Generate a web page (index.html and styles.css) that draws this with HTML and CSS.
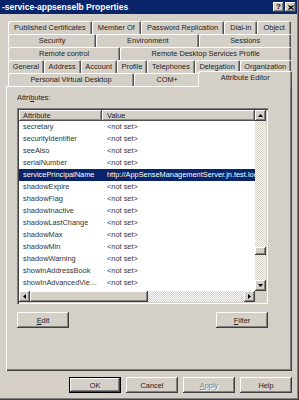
FILE: index.html
```html
<!DOCTYPE html>
<html lang="en">
<head>
    <meta charset="UTF-8">
    <title>-service-appsenselb Properties</title>
    <link rel="stylesheet" href="styles.css">
</head>
<body>
    <div class="window">
        <div class="titlebar">
            <span class="title">-service-appsenselb Properties</span>
            <div class="caption-btns">
                <span class="cbtn">?</span>
                <span class="cbtn">
                    <svg width="6" height="5" viewBox="0 0 6 5"><path d="M0.5 0.5L5.5 4.5M5.5 0.5L0.5 4.5" stroke="#000" stroke-width="1.3"/></svg>
                </span>
            </div>
        </div>

        <div class="tabs">
            <div class="tab-row">
                <div class="tab">Published Certificates</div>
                <div class="tab">Member Of</div>
                <div class="tab">Password Replication</div>
                <div class="tab">Dial-in</div>
                <div class="tab">Object</div>
            </div>
            <div class="tab-row">
                <div class="tab">Security</div>
                <div class="tab">Environment</div>
                <div class="tab">Sessions</div>
            </div>
            <div class="tab-row">
                <div class="tab">Remote control</div>
                <div class="tab">Remote Desktop Services Profile</div>
            </div>
            <div class="tab-row">
                <div class="tab">General</div>
                <div class="tab">Address</div>
                <div class="tab">Account</div>
                <div class="tab">Profile</div>
                <div class="tab">Telephones</div>
                <div class="tab">Delegation</div>
                <div class="tab">Organization</div>
            </div>
            <div class="tab-row">
                <div class="tab">Personal Virtual Desktop</div>
                <div class="tab">COM+</div>
                <div class="tab active">Attribute Editor</div>
            </div>
        </div>

        <div class="panel">
            <div class="label">Attri<u>b</u>utes:</div>
            <div class="listbox">
                <div class="list-area">
                    <div class="list-header">
                        <div class="hcell col-attr">Attribute</div>
                        <div class="hcell col-val">Value</div>
                    </div>
                    <div class="list-row"><span class="col-attr">secretary</span><span class="col-val">&lt;not set&gt;</span></div>
                    <div class="list-row"><span class="col-attr">securityIdentifier</span><span class="col-val">&lt;not set&gt;</span></div>
                    <div class="list-row"><span class="col-attr">seeAlso</span><span class="col-val">&lt;not set&gt;</span></div>
                    <div class="list-row"><span class="col-attr">serialNumber</span><span class="col-val">&lt;not set&gt;</span></div>
                    <div class="list-row selected"><span class="col-attr">servicePrincipalName</span><span class="col-val">http://AppSenseManagementServer.jn.test.local</span></div>
                    <div class="list-row"><span class="col-attr">shadowExpire</span><span class="col-val">&lt;not set&gt;</span></div>
                    <div class="list-row"><span class="col-attr">shadowFlag</span><span class="col-val">&lt;not set&gt;</span></div>
                    <div class="list-row"><span class="col-attr">shadowInactive</span><span class="col-val">&lt;not set&gt;</span></div>
                    <div class="list-row"><span class="col-attr">shadowLastChange</span><span class="col-val">&lt;not set&gt;</span></div>
                    <div class="list-row"><span class="col-attr">shadowMax</span><span class="col-val">&lt;not set&gt;</span></div>
                    <div class="list-row"><span class="col-attr">shadowMin</span><span class="col-val">&lt;not set&gt;</span></div>
                    <div class="list-row"><span class="col-attr">shadowWarning</span><span class="col-val">&lt;not set&gt;</span></div>
                    <div class="list-row"><span class="col-attr">showInAddressBook</span><span class="col-val">&lt;not set&gt;</span></div>
                    <div class="list-row"><span class="col-attr">showInAdvancedViewOnly</span><span class="col-val">&lt;not set&gt;</span></div>
                </div>

                <div class="vscroll">
                    <div class="sbtn"><svg width="5" height="3" viewBox="0 0 5 3"><path d="M0 3h5L2.5 0z"/></svg></div>
                    <div class="track vtrack-top"></div>
                    <div class="sthumb vthumb"></div>
                    <div class="track vtrack-bottom"></div>
                    <div class="sbtn"><svg width="5" height="3" viewBox="0 0 5 3"><path d="M0 0h5L2.5 3z"/></svg></div>
                </div>

                <div class="hscroll">
                    <div class="sbtn"><svg width="3" height="5" viewBox="0 0 3 5"><path d="M3 0v5L0 2.5z"/></svg></div>
                    <div class="sthumb hthumb"></div>
                    <div class="track htrack"></div>
                    <div class="sbtn"><svg width="3" height="5" viewBox="0 0 3 5"><path d="M0 0v5L3 2.5z"/></svg></div>
                </div>

                <div class="corner"></div>
            </div>

            <div class="panel-btns">
                <button class="btn"><u>E</u>dit</button>
                <button class="btn"><u>F</u>ilter</button>
            </div>
        </div>

        <div class="dialog-btns">
            <button class="btn default">OK</button>
            <button class="btn">Cancel</button>
            <button class="btn disabled"><u>A</u>pply</button>
            <button class="btn">Help</button>
        </div>
    </div>
</body>
</html>
```

FILE: styles.css
```css
* {
    box-sizing: border-box;
}

body {
    margin: 0;
    font-family: "Liberation Sans", Arial, sans-serif;
    font-size: 7.4px;
    color: #222;
    background-color: #d4d0c8;
}

.window {
    width: 299px;
    height: 400px;
    background-color: #d4d0c8;
    display: flex;
    flex-direction: column;
    overflow: hidden;
    box-shadow: inset -1px -1px #404040, inset -2px -2px #808080;
}

/* title bar */
.titlebar {
    height: 14px;
    margin-right: 2px;
    padding: 0 1px 0 2px;
    background-color: #0a246a;
    color: #fff;
    display: flex;
    align-items: center;
    justify-content: space-between;
}

.title {
    font-weight: bold;
    font-size: 8.5px;
    white-space: nowrap;
}

.caption-btns {
    display: flex;
    gap: 1px;
}

.cbtn {
    width: 11px;
    height: 10px;
    background-color: #d4d0c8;
    color: #000;
    font-weight: bold;
    font-size: 8px;
    line-height: 10px;
    display: flex;
    align-items: center;
    justify-content: center;
    box-shadow: inset -1px -1px #404040, inset 1px 1px #fff, inset -2px -2px #808080;
}

/* tabs */
.tabs {
    margin: 7px 8px 0 8px;
    display: flex;
    flex-direction: column;
}

.tab-row {
    display: flex;
    height: 13px;
}

.tab {
    flex: 1 1 auto;
    display: flex;
    align-items: center;
    justify-content: center;
    white-space: nowrap;
    padding: 0 2px;
    border-radius: 2px 2px 0 0;
    background-color: #d4d0c8;
    box-shadow: inset 1px 1px #fff, inset -1px 0 #505050, inset -2px 0 #8c8c8c;
}

.tab.active {
    position: relative;
    z-index: 1;
    height: 16px;
    margin: -2px -1px 0 -2px;
    padding-bottom: 3px;
}

/* page */
.panel {
    height: 285px;
    margin: 0 7px 0 6px;
    padding: 0 24px 0 11px;
    box-shadow: inset 1px 1px #fff, inset -1px -1px #404040, inset -2px -2px #808080;
    display: flex;
    flex-direction: column;
}

.label {
    height: 10px;
    line-height: 10px;
    margin: 7px 0 5px 0;
}

.listbox {
    height: 196px;
    padding: 2px;
    background-color: #fff;
    box-shadow: inset 1px 1px #808080, inset 2px 2px #404040, inset -1px -1px #fff, inset -2px -2px #d4d0c8;
    display: grid;
    grid-template-columns: 1fr 11px;
    grid-template-rows: 1fr 11px;
}

.list-area {
    overflow: hidden;
    color: #333;
}

.list-header {
    display: flex;
    height: 11px;
    color: #222;
}

.hcell {
    line-height: 11px;
    padding-left: 4px;
    background-color: #d4d0c8;
    box-shadow: inset -1px -1px #505050, inset 1px 1px #fff, inset -2px -2px #8c8c8c;
}

.hcell.col-val {
    flex: 1;
}

.list-row {
    display: flex;
    height: 12px;
    line-height: 12px;
    white-space: nowrap;
}

.col-attr {
    width: 83px;
    flex: none;
    padding: 0 3px 0 4px;
    overflow: hidden;
    text-overflow: ellipsis;
}

.col-val {
    padding-left: 5px;
    overflow: hidden;
}

.list-row.selected {
    background-color: #0a246a;
    color: #fff;
}

/* scrollbars */
.vscroll {
    display: flex;
    flex-direction: column;
}

.hscroll {
    display: flex;
}

.sbtn {
    width: 11px;
    height: 11px;
    flex: none;
    background-color: #d4d0c8;
    display: flex;
    align-items: center;
    justify-content: center;
    box-shadow: inset -1px -1px #404040, inset 1px 1px #fff, inset -2px -2px #808080;
}

.track {
    background: repeating-conic-gradient(#fff 0 25%, #d4d0c8 0 50%) 0 0 / 2px 2px;
}

.vtrack-top {
    height: 126px;
}

.vtrack-bottom {
    flex: 1;
}

.htrack {
    flex: 1;
}

.sthumb {
    background-color: #d4d0c8;
    box-shadow: inset -1px -1px #404040, inset 1px 1px #fff, inset -2px -2px #808080;
}

.vthumb {
    height: 8px;
}

.hthumb {
    width: 118px;
}

.corner {
    background-color: #d4d0c8;
}

/* buttons */
.btn {
    width: 52px;
    height: 16px;
    padding: 0;
    border: none;
    font-family: inherit;
    font-size: 7.4px;
    color: #222;
    background-color: #d4d0c8;
    box-shadow: inset -1px -1px #404040, inset 1px 1px #fff, inset -2px -2px #808080;
}

.btn.default {
    box-shadow: inset 0 0 0 1px #000, inset -2px -2px #404040, inset 2px 2px #fff, inset -3px -3px #808080;
}

.btn.disabled {
    color: #808080;
    text-shadow: 1px 1px #fff;
}

.panel-btns {
    display: flex;
    justify-content: space-between;
    margin-top: 8px;
}

.dialog-btns {
    display: flex;
    justify-content: flex-end;
    gap: 5px;
    margin: 6px 7px 0 0;
}
```
